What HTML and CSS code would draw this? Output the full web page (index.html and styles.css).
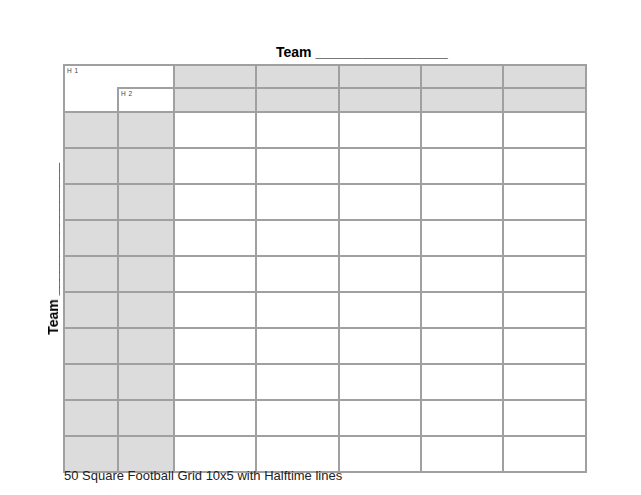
FILE: index.html
```html
<!DOCTYPE html>
<html>
<head>
<meta charset="utf-8">
<link rel="stylesheet" href="styles.css">
</head>
<body>
<div class="page">
  <div class="title">Team _________________</div>
  <div class="main">
    <div class="side"><div class="side-label">Team _________________</div></div>
    <div class="grid">
      <div class="h1"><span class="hl">H 1</span></div>
      <div class="h2"><span class="hl">H 2</span></div>
      <div class="g"></div><div class="g"></div><div class="g"></div><div class="g"></div><div class="g"></div>
      <div class="g"></div><div class="g"></div><div class="g"></div><div class="g"></div><div class="g"></div>
      <div class="g"></div><div class="g"></div><div class="w"></div><div class="w"></div><div class="w"></div><div class="w"></div><div class="w"></div>
      <div class="g"></div><div class="g"></div><div class="w"></div><div class="w"></div><div class="w"></div><div class="w"></div><div class="w"></div>
      <div class="g"></div><div class="g"></div><div class="w"></div><div class="w"></div><div class="w"></div><div class="w"></div><div class="w"></div>
      <div class="g"></div><div class="g"></div><div class="w"></div><div class="w"></div><div class="w"></div><div class="w"></div><div class="w"></div>
      <div class="g"></div><div class="g"></div><div class="w"></div><div class="w"></div><div class="w"></div><div class="w"></div><div class="w"></div>
      <div class="g"></div><div class="g"></div><div class="w"></div><div class="w"></div><div class="w"></div><div class="w"></div><div class="w"></div>
      <div class="g"></div><div class="g"></div><div class="w"></div><div class="w"></div><div class="w"></div><div class="w"></div><div class="w"></div>
      <div class="g"></div><div class="g"></div><div class="w"></div><div class="w"></div><div class="w"></div><div class="w"></div><div class="w"></div>
      <div class="g"></div><div class="g"></div><div class="w"></div><div class="w"></div><div class="w"></div><div class="w"></div><div class="w"></div>
      <div class="g"></div><div class="g"></div><div class="w"></div><div class="w"></div><div class="w"></div><div class="w"></div><div class="w"></div>
    </div>
  </div>
  <div class="caption">50 Square Football Grid 10x5 with Halftime lines</div>
</div>
</body>
</html>
```
FILE: styles.css
```css
html, body {
  margin: 0;
  padding: 0;
  background: #ffffff;
}
body {
  font-family: "Liberation Sans", Arial, sans-serif;
  color: #000;
}
.page {
  padding-top: 44px;
}
.title {
  font-size: 14px;
  font-weight: bold;
  line-height: 17px;
  padding-left: 276px;
  margin-bottom: 3px;
  white-space: nowrap;
}
.main {
  display: flex;
  align-items: stretch;
}
.side {
  width: 63px;
  flex: none;
  display: flex;
  justify-content: flex-end;
  align-items: flex-end;
  padding-bottom: 138px;
  box-sizing: border-box;
}
.side-label {
  writing-mode: vertical-rl;
  transform: rotate(180deg);
  will-change: transform;
  background: #fff;
  font-size: 14px;
  font-weight: bold;
  line-height: 17px;
  white-space: nowrap;
  margin-right: 1px;
}
.grid {
  display: grid;
  grid-template-columns: 52px 54px 80px 81px 80px 80px 81px;
  grid-template-rows: 21px 22px repeat(10, 34px);
  gap: 2px;
  padding: 2px;
  background: #a0a0a0;
}
.h1 {
  grid-column: 1 / 3;
  grid-row: 1 / 3;
  background: #fff;
  padding: 1px 0 0 2px;
}
.h2 {
  grid-column: 2 / 3;
  grid-row: 2 / 3;
  background: #fff;
  margin: -2px 0 0 -2px;
  border-top: 2px solid #a0a0a0;
  border-left: 2px solid #a0a0a0;
  padding: 1px 0 0 2px;
}
.hl {
  display: block;
  font-size: 6.5px;
  line-height: 7px;
  color: #444;
  letter-spacing: 0.5px;
}
.g {
  background: #dcdcdc;
}
.w {
  background: #ffffff;
}
.caption {
  margin-top: -5px;
  margin-left: 64px;
  font-size: 13px;
  line-height: 16px;
  color: #222;
  white-space: nowrap;
  position: relative;
}
```
